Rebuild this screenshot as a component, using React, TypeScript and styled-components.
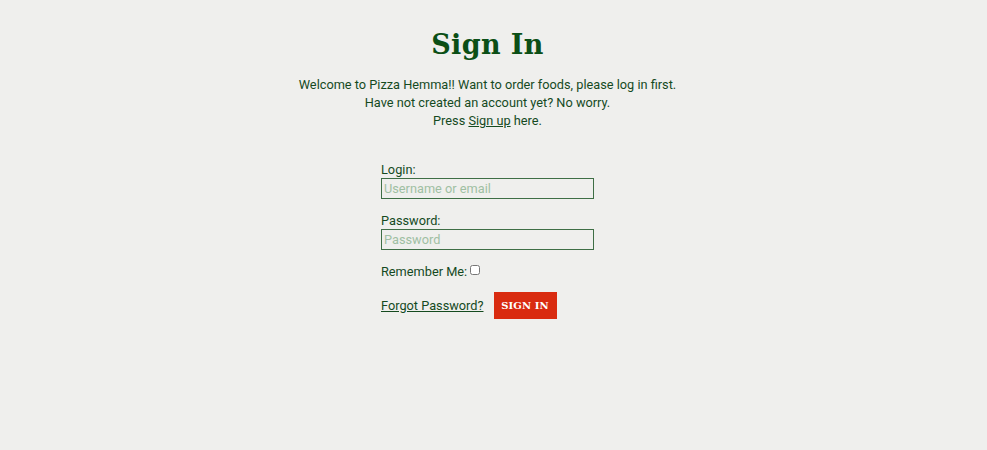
import React from "react";
import styled, { createGlobalStyle } from "styled-components";

const Global = createGlobalStyle`
  html, body { margin: 0; padding: 0; background: #efefed; }
  body { font-family: "Roboto", "Liberation Sans", sans-serif; color: #154a1f; }
`;

const Page = styled.div`
  display: flex;
  flex-direction: column;
  align-items: center;
  padding: 26px 12px 0 0;
  min-height: 450px;
  box-sizing: border-box;
`;

const Title = styled.h1`
  margin: 0;
  font-family: "DejaVu Serif", serif;
  font-weight: 900;
  font-size: 27px;
  line-height: 38px;
  color: #0b4f16;
  letter-spacing: 0.4px;
`;

const Intro = styled.p`
  margin: 12px 0 0;
  text-align: center;
  font-size: 12.75px;
  line-height: 18px;
  color: #154a1f;
`;

const TextLink = styled.a`
  color: #154a1f;
  text-decoration: underline;
`;

const Form = styled.form`
  width: 213px;
  margin-top: 32px;
  display: flex;
  flex-direction: column;
`;

const Field = styled.div`
  display: flex;
  flex-direction: column;
  margin-bottom: 14px;
`;

const Label = styled.label`
  font-size: 12.75px;
  line-height: 16px;
`;

const Input = styled.input`
  width: 213px;
  height: 21px;
  box-sizing: border-box;
  border: 1px solid #3e6e45;
  background: #efefed;
  padding: 0 2px;
  font-family: "Roboto", "Liberation Sans", sans-serif;
  font-size: 12.75px;
  color: #154a1f;
  outline: none;
  &::placeholder { color: #9fbfa3; }
`;

const RememberRow = styled.div`
  display: flex;
  align-items: center;
  font-size: 12.75px;
  line-height: 15px;
`;

const Check = styled.input`
  margin: 0 0 3px 3px;
  width: 10px;
  height: 10px;
`;

const Actions = styled.div`
  display: flex;
  align-items: center;
  gap: 10px;
  margin-top: 13px;
`;

const Forgot = styled.a`
  font-size: 12.75px;
  color: #154a1f;
  text-decoration: underline;
`;

const Button = styled.button`
  background: #d92b10;
  color: #fff;
  border: none;
  width: 63px;
  height: 27px;
  padding: 0;
  font-family: "DejaVu Serif", serif;
  font-weight: 900;
  font-size: 10px;
  letter-spacing: 0.1px;
  cursor: pointer;
`;

export default function App() {
  return (
    <>
      <Global />
      <Page>
        <Title>Sign In</Title>
        <Intro>
          Welcome to Pizza Hemma!! Want to order foods, please log in first.
          <br />
          Have not created an account yet? No worry.
          <br />
          Press <TextLink href="#">Sign up</TextLink> here.
        </Intro>
        <Form onSubmit={(e) => e.preventDefault()}>
          <Field>
            <Label htmlFor="login">Login:</Label>
            <Input id="login" placeholder="Username or email" />
          </Field>
          <Field>
            <Label htmlFor="password">Password:</Label>
            <Input id="password" type="password" placeholder="Password" />
          </Field>
          <RememberRow>
            <label htmlFor="remember">Remember Me:</label>
            <Check id="remember" type="checkbox" />
          </RememberRow>
          <Actions>
            <Forgot href="#">Forgot Password?</Forgot>
            <Button type="submit">SIGN IN</Button>
          </Actions>
        </Form>
      </Page>
    </>
  );
}
